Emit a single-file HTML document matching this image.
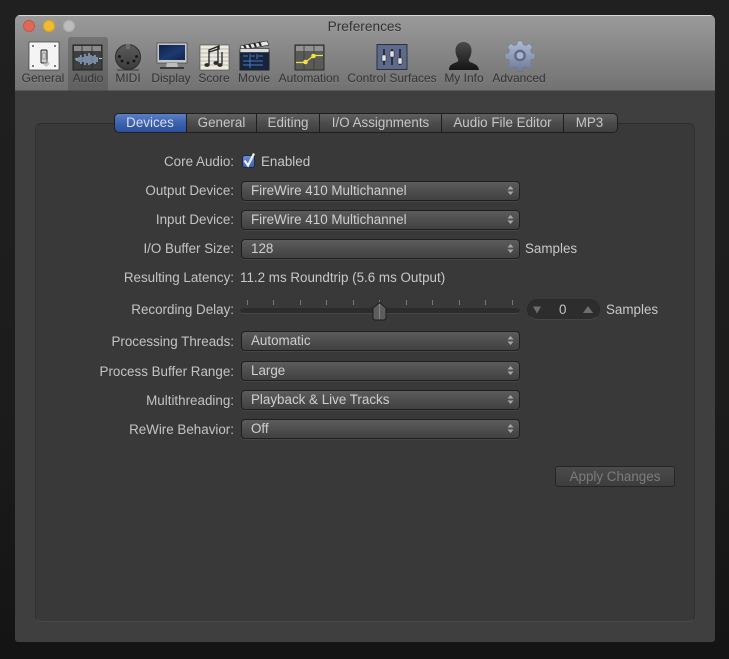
<!DOCTYPE html>
<html><head><meta charset="utf-8"><style>
html,body{margin:0;padding:0;width:729px;height:659px;overflow:hidden;background:#1d1d1d}
body{position:relative;font-family:"Liberation Sans",sans-serif;font-size:13.4px;color:#c8c8c8}
.a{position:absolute}
#shade{left:0;top:0;width:729px;height:659px;background:linear-gradient(#202020,#1c1c1c 60%,#141414)}
#win{left:15px;top:15px;width:700px;height:627px;border-radius:5px 5px 3px 3px;background:#3f3f3f;overflow:hidden}
#bar{left:0;top:0;width:700px;height:76px;background:linear-gradient(#9a9a9a,#8c8c8c 35%,#727272);border-top:1px solid #d8d8d8;box-sizing:border-box;border-bottom:1px solid #5a5a5a}
#sel{left:53px;top:22px;width:40px;height:54px;background:rgba(60,60,60,.33);border-radius:3px 3px 0 0}
.tl{border-radius:50%;width:12px;height:12px}
.t{position:absolute;white-space:nowrap;line-height:15px}
.tb{font-size:12px;color:#333;text-align:center;top:71px;text-shadow:0 1px 0 rgba(255,255,255,.1)}
#box{left:35px;top:123px;width:660px;height:499px;box-sizing:border-box;background:#393939;border:1px solid #323232;border-top-color:#2c2c2c;border-bottom-color:#484848;border-radius:6px}
#tabs{left:114px;top:113px;width:504px;height:20px;box-sizing:border-box;border:1px solid #1e1e1e;border-radius:5px;background:linear-gradient(#5f5f5f,#4c4c4c 50%,#3f3f3f);overflow:hidden}
.tab{position:absolute;top:-1px;height:20px;line-height:19px;text-align:center;color:#c6c6c6;border-right:1px solid #1e1e1e;box-sizing:content-box}
.lab{right:495px;text-align:right;color:#c4c4c4}
.pop{position:absolute;left:241px;width:279px;height:20px;box-sizing:border-box;border:1px solid #1f1f1f;border-radius:4px;background:linear-gradient(#5c5c5c,#4e4e4e 50%,#414141);box-shadow:0 1px 0 rgba(255,255,255,.07);color:#cfcfcf;line-height:18px;padding-left:9px}
.pop svg{position:absolute;right:4px;top:3px}
.tick{position:absolute;top:300px;width:1px;height:5px;background:#787878}
</style></head><body>
<div class="a" id="shade"></div>
<div class="a" id="win">
<div class="a" id="bar"></div>
<div class="a" id="sel"></div>
<div class="a tl" style="left:8px;top:5px;background:#dd6a58;box-shadow:inset 0 0 0 1px #c4574a"></div>
<div class="a tl" style="left:28px;top:5px;background:#f1bc2e;box-shadow:inset 0 0 0 1px #d6a22b"></div>
<div class="a tl" style="left:48px;top:5px;background:#bcbcbc;box-shadow:inset 0 0 0 1px #aaa"></div>
</div>
<div class="t" style="left:0;width:729px;text-align:center;top:19px;color:#333;font-size:13.7px;text-shadow:0 1px 0 rgba(255,255,255,.1)">Preferences</div>

<svg class="a" style="left:0;top:0" width="729" height="92" viewBox="0 0 729 92">
<defs>
<linearGradient id="md" x1="0" y1="0" x2="0" y2="1"><stop offset="0" stop-color="#5b5b5b"/><stop offset="1" stop-color="#3b3b3b"/></linearGradient>
<linearGradient id="scr" x1="0" y1="0" x2="1" y2="1"><stop offset="0" stop-color="#0f1f48"/><stop offset=".55" stop-color="#1d3a70"/><stop offset="1" stop-color="#10244f"/></linearGradient>
<linearGradient id="gear" x1="0" y1="0" x2="0" y2="1"><stop offset="0" stop-color="#b0bbd4"/><stop offset="1" stop-color="#6d7a99"/></linearGradient>
<linearGradient id="man" x1="0" y1="0" x2="0" y2="1"><stop offset="0" stop-color="#4a4a4a"/><stop offset="1" stop-color="#151515"/></linearGradient>
</defs>
<!-- General -->
<rect x="29" y="42" width="30" height="28" fill="#f4f4f4" stroke="#3a3a3a" stroke-width=".7"/>
<rect x="41" y="50" width="6" height="13" rx="1" fill="#cfcfcf" stroke="#222"/>
<rect x="43" y="53" width="2" height="6" fill="#fff" stroke="#444" stroke-width=".5"/>
<path d="M47 60l3 4-4 3-3-3z" fill="#aaa" opacity=".6"/>
<circle cx="33" cy="46" r="1" fill="#555"/><circle cx="55" cy="46" r="1" fill="#555"/><circle cx="33" cy="66" r="1" fill="#555"/><circle cx="55" cy="66" r="1" fill="#555"/>
<!-- Audio -->
<rect x="73" y="45" width="29" height="25" fill="#3f3f3f" stroke="#222"/>
<rect x="74" y="46" width="27" height="5" fill="#8a8a8a"/>
<path d="M82 46v23M92 46v23" stroke="#2a2a2a" stroke-width=".8"/>
<path d="M75 59h2M77 58v3M79 57v5M81 55v9M83 57v5M85 54v11M87 56v7M89 53v12M91 55v9M93 56v7M95 55v9M97 57v5M99 58.500h3" stroke="#a9cbf6" stroke-width="1.100" fill="none"/>
<!-- MIDI -->
<circle cx="128" cy="57" r="12.500" fill="url(#md)" stroke="#2c2c2c"/>
<rect x="126" y="44" width="4" height="5" fill="#6c6c6c"/>
<path d="M117 70h22" stroke="#333" stroke-width="1.200" opacity=".7"/>
<g fill="#141414"><circle cx="119.500" cy="56.500" r="1.400"/><circle cx="122" cy="61" r="1.400"/><circle cx="128" cy="63" r="1.400"/><circle cx="134" cy="61" r="1.400"/><circle cx="136.500" cy="56.500" r="1.400"/></g>
<!-- Display -->
<rect x="157" y="43" width="30" height="20" fill="#c6c6c6" stroke="#444" stroke-width=".7"/>
<rect x="159" y="45" width="26" height="15" fill="url(#scr)"/>
<path d="M167 63h10l1 4h-12z" fill="#bdbdbd"/>
<rect x="160" y="67" width="24" height="2" fill="#2c2c2c" opacity=".8"/>
<!-- Score -->
<rect x="200" y="45" width="29" height="25" fill="#ece9df" stroke="#444" stroke-width=".6"/>
<path d="M200 49h29M200 53h29M200 57h29M200 61h29M200 65h29" stroke="#8a8a80" stroke-width=".6"/>
<path d="M209 65V50l10-4v3l-10 3M218 63V47M222 64V52" stroke="#222" stroke-width="1.300" fill="none"/>
<ellipse cx="207" cy="65" rx="2.600" ry="1.900" fill="#2c2c2c"/><ellipse cx="216" cy="63" rx="2.600" ry="1.900" fill="#2c2c2c"/><ellipse cx="220" cy="65" rx="2.600" ry="1.900" fill="#2c2c2c"/>
<!-- Movie -->
<rect x="240" y="51" width="29" height="19" fill="#16233c" stroke="#222"/>
<path d="M240 46l27-5 2 4-27 5z" fill="#e8e8e8" stroke="#222" stroke-width=".6"/>
<path d="M244 45l2 4M249 44l2 4M254 43l2 4M259 42l2 4" stroke="#222" stroke-width="2"/>
<rect x="240" y="48.500" width="29" height="4" fill="#dcdcdc" stroke="#222" stroke-width=".6"/>
<path d="M243 56h5M251 56h4M258 56h5M243 61h20M243 65h20M250 54v14M257 54v5" stroke="#4e78c0" stroke-width="1"/>
<!-- Automation -->
<rect x="295" y="45" width="29" height="25" fill="#5a5a56" stroke="#2b2b2b"/>
<rect x="296" y="46" width="27" height="5" fill="#929292"/>
<path d="M304 46v23M314 46v23" stroke="#3a3a3a" stroke-width=".8"/>
<path d="M296 62.500h9l9-7h9" stroke="#f5e23c" stroke-width="1.200" fill="none"/>
<circle cx="305.500" cy="62" r="2.300" fill="#f2e040"/><circle cx="313.500" cy="56" r="2.300" fill="#f2e040"/>
<!-- Control surfaces -->
<rect x="377" y="44.500" width="30" height="25" fill="#5d6a8c" stroke="#2c3142"/>
<path d="M384 49v16M392 49v16M400 49v16" stroke="#111" stroke-width="1.300"/>
<rect x="382" y="55" width="4" height="6" fill="#e4e4e4" stroke="#222" stroke-width=".5"/>
<rect x="390" y="51" width="4" height="6" fill="#e4e4e4" stroke="#222" stroke-width=".5"/>
<rect x="398" y="58" width="4" height="6" fill="#e4e4e4" stroke="#222" stroke-width=".5"/>
<!-- My Info -->
<path d="M449 70c0-5 3-6 8-8 1-.5 1.500-2 1-3-2-3-2.500-6-2.500-9 0-4 3-8 8-8s8 4 8 8c0 3-.5 6-2.500 9-.5 1 0 2.500 1 3 5 2 8 3 9 8z" fill="url(#man)"/>
<!-- Advanced -->
<g transform="translate(520,55.500) scale(.78)">
<g fill="url(#gear)" stroke="#5f6b86" stroke-width=".5">
<path d="M-3-18.500h6l1 4.500 3.500 1.500 4-2.700 4.500 4.500-2.700 4 1.500 3.500 4.500 1v6.400l-4.500 1-1.500 3.500 2.700 4-4.500 4.500-4-2.700-3.500 1.500-1 4.500h-6l-1-4.500-3.500-1.500-4 2.700-4.500-4.500 2.700-4-1.500-3.500-4.500-1v-6.400l4.500-1 1.500-3.500-2.700-4 4.500-4.500 4 2.700 3.500-1.500z"/>
</g>
<circle r="7.500" fill="#5f6b86"/><circle r="4.500" fill="#a9b3c9"/>
</g>
</svg>

<div class="t tb" style="left:3px;width:80px">General</div>
<div class="t tb" style="left:68px;width:40px">Audio</div>
<div class="t tb" style="left:108px;width:40px">MIDI</div>
<div class="t tb" style="left:146px;width:50px">Display</div>
<div class="t tb" style="left:194px;width:40px">Score</div>
<div class="t tb" style="left:234px;width:40px">Movie</div>
<div class="t tb" style="left:269px;width:80px">Automation</div>
<div class="t tb" style="left:342px;width:100px">Control Surfaces</div>
<div class="t tb" style="left:434px;width:60px">My Info</div>
<div class="t tb" style="left:489px;width:60px">Advanced</div>

<div class="a" id="box"></div>
<div class="a" id="tabs">
<div class="tab" style="left:-1px;width:72px;background:linear-gradient(#5d82c8,#3d62ae 50%,#2a4c96);color:#d6def0;">Devices</div>
<div class="tab" style="left:72px;width:69px">General</div>
<div class="tab" style="left:142px;width:62px">Editing</div>
<div class="tab" style="left:205px;width:121px">I/O Assignments</div>
<div class="tab" style="left:327px;width:121px">Audio File Editor</div>
<div class="tab" style="left:449px;width:51px;border-right:0">MP3</div>
</div>

<div class="t lab" style="top:154px">Core Audio:</div>
<div class="t lab" style="top:183px">Output Device:</div>
<div class="t lab" style="top:212px">Input Device:</div>
<div class="t lab" style="top:241px">I/O Buffer Size:</div>
<div class="t lab" style="top:270px">Resulting Latency:</div>
<div class="t lab" style="top:302px">Recording Delay:</div>
<div class="t lab" style="top:334px">Processing Threads:</div>
<div class="t lab" style="top:364px">Process Buffer Range:</div>
<div class="t lab" style="top:393px">Multithreading:</div>
<div class="t lab" style="top:422px">ReWire Behavior:</div>

<div class="a" style="left:242px;top:155px;width:13px;height:13px;box-sizing:border-box;border:1px solid #1d2740;border-radius:3px;background:linear-gradient(#6a8cd0,#3f62ad)"></div>
<svg class="a" style="left:241px;top:151px" width="18" height="18"><path d="M3.500 9.500l3.500 5L13 2.500" stroke="#f2f2f2" stroke-width="2.200" fill="none"/></svg>
<div class="t" style="left:261px;top:154px">Enabled</div>

<div class="pop" style="top:181px">FireWire 410 Multichannel<svg width="9" height="11"><path d="M4.500 1L7.500 4.500H1.500zM4.500 10L1.500 6.500H7.500z" fill="#a8a8a8"/></svg></div>
<div class="pop" style="top:210px">FireWire 410 Multichannel<svg width="9" height="11"><path d="M4.500 1L7.500 4.500H1.500zM4.500 10L1.500 6.500H7.500z" fill="#a8a8a8"/></svg></div>
<div class="pop" style="top:239px">128<svg width="9" height="11"><path d="M4.500 1L7.500 4.500H1.500zM4.500 10L1.500 6.500H7.500z" fill="#a8a8a8"/></svg></div>
<div class="t" style="left:525px;top:241px">Samples</div>
<div class="t" style="left:240px;top:270px">11.2 ms Roundtrip (5.6 ms Output)</div>

<div class="tick" style="left:247px"></div><div class="tick" style="left:273px"></div><div class="tick" style="left:300px"></div><div class="tick" style="left:326px"></div><div class="tick" style="left:353px"></div><div class="tick" style="left:379px"></div><div class="tick" style="left:406px"></div><div class="tick" style="left:432px"></div><div class="tick" style="left:459px"></div><div class="tick" style="left:485px"></div><div class="tick" style="left:512px"></div>
<div class="a" style="left:240px;top:308px;width:280px;height:6px;box-sizing:border-box;border-radius:3px;background:#2c2c2c;border-bottom:1px solid #464646"></div>
<svg class="a" style="left:372px;top:302px" width="15" height="19"><path d="M7.500.5L14 6v10.500l-1.500 1.500h-10L1 16.500V6z" fill="#5d5d5d" stroke="#1d1d1d"/><path d="M7.500 2v15" stroke="#858585"/></svg>

<div class="a" style="left:527px;top:299px;width:73px;height:21px;box-sizing:border-box;border-radius:11px;background:#2d2d2d;border:1px solid #2a2a2a;border-bottom-color:#444"></div>
<svg class="a" style="left:533px;top:305px" width="62" height="10"><path d="M0 1.500h8L4 8.500zM50 8h10L55 1z" fill="#6e6e6e"/></svg>
<div class="t" style="left:559px;top:302px;color:#c4c4c4">0</div>
<div class="t" style="left:606px;top:302px">Samples</div>

<div class="pop" style="top:331px">Automatic<svg width="9" height="11"><path d="M4.500 1L7.500 4.500H1.500zM4.500 10L1.500 6.500H7.500z" fill="#a8a8a8"/></svg></div>
<div class="pop" style="top:361px">Large<svg width="9" height="11"><path d="M4.500 1L7.500 4.500H1.500zM4.500 10L1.500 6.500H7.500z" fill="#a8a8a8"/></svg></div>
<div class="pop" style="top:390px">Playback &amp; Live Tracks<svg width="9" height="11"><path d="M4.500 1L7.500 4.500H1.500zM4.500 10L1.500 6.500H7.500z" fill="#a8a8a8"/></svg></div>
<div class="pop" style="top:419px">Off<svg width="9" height="11"><path d="M4.500 1L7.500 4.500H1.500zM4.500 10L1.500 6.500H7.500z" fill="#a8a8a8"/></svg></div>

<div class="a" style="left:555px;top:466px;width:120px;height:21px;box-sizing:border-box;border:1px solid #252525;border-radius:3px;background:linear-gradient(#4b4b4b,#3d3d3d);color:#7c7c7c;text-align:center;line-height:19px">Apply Changes</div>
</body></html>
